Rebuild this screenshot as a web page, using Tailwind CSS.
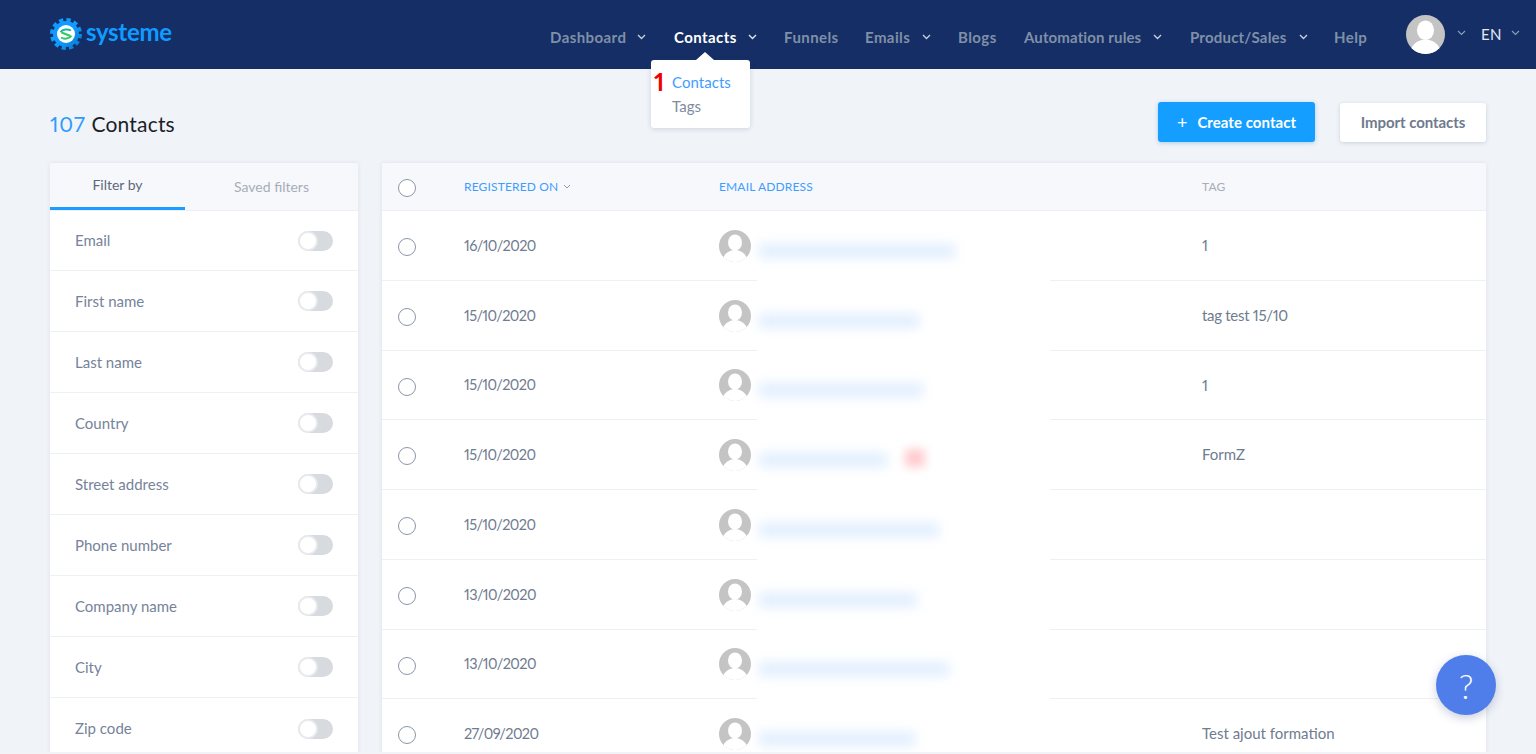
<!doctype html>
<html lang="en">
<head>
<meta charset="utf-8">
<title>Contacts</title>
<script src="https://cdn.jsdelivr.net/npm/@tailwindcss/browser@4"></script>
</head>
<body class="relative h-[754px] w-[1536px] overflow-hidden bg-[#f0f3f8] font-['Lato',sans-serif] proportional-nums">
<header class="relative flex h-[69px] items-start bg-[#152e65]">
  <div class="flex w-[550px] shrink-0 items-start pl-[50px] pt-[18px]">
    <svg class="h-[32px] w-[32px]" viewBox="0 0 32 32">
      <defs><linearGradient id="g" x1="0" y1="0" x2="1" y2="1"><stop offset="0.55" stop-color="#0f9bff"/><stop offset="1" stop-color="#0a78c8"/></linearGradient></defs>
      <circle cx="16" cy="16" r="13" fill="url(#g)"/>
      <circle cx="16" cy="16" r="14" fill="none" stroke="url(#g)" stroke-width="4" stroke-dasharray="4.2 3.13"/>
      <circle cx="16" cy="16" r="9" fill="#fff"/>
      <path d="M10.500 14.200c2-3 7.500-3.400 10.500-1.700" fill="none" stroke="#18b5a0" stroke-width="2"/>
      <path d="M11 19.500c3 1.900 8.500 1.500 10.500-1.800" fill="none" stroke="#2ec866" stroke-width="2"/>
      <path d="M11.500 14.500l9 3.500" stroke="#2ec866" stroke-width="2"/>
    </svg>
    <span class="ml-[4px] -mt-[1px] text-[24px] leading-[30px] font-bold tracking-[-0.3px] text-[#0f9bff]">systeme</span>
  </div>
  <nav class="flex h-[69px] items-start pt-[28px] text-[15px] leading-[18px] font-bold tracking-[0.42px] text-[#7f90a8]">
    <a class="flex w-[124px] items-center">Dashboard<svg class="ml-[11px] h-[6px] w-[9px]" viewBox="0 0 9 6"><path d="M1 1l3.500 3.500L8 1" fill="none" stroke="#c5ceda" stroke-width="1.400"/></svg></a>
    <a class="flex w-[110px] items-center text-white">Contacts<svg class="ml-[11px] h-[6px] w-[9px]" viewBox="0 0 9 6"><path d="M1 1l3.500 3.500L8 1" fill="none" stroke="#dfe5ee" stroke-width="1.400"/></svg></a>
    <a class="w-[81px]">Funnels</a>
    <a class="flex w-[93px] items-center">Emails<svg class="ml-[12px] h-[6px] w-[9px]" viewBox="0 0 9 6"><path d="M1 1l3.500 3.500L8 1" fill="none" stroke="#c5ceda" stroke-width="1.400"/></svg></a>
    <a class="w-[66px]">Blogs</a>
    <a class="flex w-[166px] items-center tracking-[0.12px]">Automation rules<svg class="ml-[12px] h-[6px] w-[9px]" viewBox="0 0 9 6"><path d="M1 1l3.500 3.500L8 1" fill="none" stroke="#c5ceda" stroke-width="1.400"/></svg></a>
    <a class="flex w-[144px] items-center tracking-[0.2px]">Product/Sales<svg class="ml-[12px] h-[6px] w-[9px]" viewBox="0 0 9 6"><path d="M1 1l3.500 3.500L8 1" fill="none" stroke="#c5ceda" stroke-width="1.400"/></svg></a>
    <a class="w-[72px]">Help</a>
  </nav>
  <div class="flex items-start pt-[15px]">
    <svg class="h-[39px] w-[39px] rounded-full" viewBox="0 0 32 32"><rect width="32" height="32" fill="#c4c4c4"/><ellipse cx="16" cy="12.500" rx="7" ry="8" fill="#fff"/><ellipse cx="16" cy="33" rx="13" ry="13" fill="#fff"/></svg>
    <svg class="ml-[12px] mt-[15px] h-[6px] w-[9px]" viewBox="0 0 9 6"><path d="M1 1l3.500 3.500L8 1" fill="none" stroke="#8d9cb3" stroke-width="1.200"/></svg>
    <span class="ml-[15px] mt-[10px] text-[15px] leading-[18px] tracking-[0.4px] text-[#e4e9f1]">EN</span>
    <svg class="ml-[9px] mt-[15px] h-[6px] w-[9px]" viewBox="0 0 9 6"><path d="M1 1l3.500 3.500L8 1" fill="none" stroke="#8d9cb3" stroke-width="1.200"/></svg>
  </div>
  <div class="absolute left-[651px] top-[60px] z-20 h-[68px] w-[99px] rounded-[3px] bg-white pl-[21px] pt-[10px] text-[15px] leading-[24px] tracking-[0.05px] shadow-[0_1px_5px_rgba(60,80,120,0.2)]">
    <div class="absolute left-[45px] top-[-8px] h-0 w-0 border-x-[9px] border-b-[8px] border-x-transparent border-b-white"></div>
    <span class="absolute left-[3px] top-[7px] text-[25px] leading-[28px] font-bold text-[#f00000]">1</span>
    <div class="text-[#3f9dff]">Contacts</div>
    <div class="text-[#7f8b9d]">Tags</div>
  </div>
</header>

<main class="px-[50px]">
  <div class="flex h-[94px] items-start justify-between">
    <h1 class="pt-[40px] text-[21px] leading-[30px] tracking-[0.2px] text-[#1b1f28]"><span class="tracking-[0.9px] text-[#2f9bff]">107</span> Contacts</h1>
    <div class="flex items-start pt-[33px]">
      <button class="flex h-[40px] w-[157px] items-center justify-center rounded-[3px] bg-[#149eff] text-[15px] font-bold tracking-[0.05px] text-white shadow-[0_1px_4px_rgba(20,120,220,0.3)]"><span class="mr-[10px] text-[18px] leading-[18px] font-normal">+</span>Create contact</button>
      <button class="ml-[25px] mt-[1px] h-[39px] w-[146px] rounded-[3px] bg-white text-[15px] font-bold tracking-[-0.07px] text-[#6e7a8e] shadow-[0_1px_4px_rgba(60,80,120,0.2)]">Import contacts</button>
    </div>
  </div>

  <div class="flex items-start gap-[24px]">
    <aside class="w-[308px] shrink-0 rounded-[3px] bg-white text-[15px] text-[#76839a] shadow-[0_0_4px_rgba(60,80,120,0.1)]">
      <div class="flex h-[48px] border-b border-[#edf0f4] bg-[#f7f8fb] text-[14px]">
        <div class="flex h-[47px] w-[135px] items-center justify-center border-b-[3px] border-[#1c9cff] pb-[1px] text-[#5d687d]">Filter by</div>
        <div class="flex h-[47px] w-[173px] items-center justify-center pb-[1px] text-[#a6adb9]">Saved filters</div>
      </div>
      <div class="flex h-[60px] items-center justify-between border-b border-[#edf0f4] px-[25px]">Email<div class="flex h-[20px] w-[35px] items-center rounded-full bg-[#d7dadf]"><div class="h-[20px] w-[20px] rounded-full border-[2px] border-[#e8eaed] bg-white"></div></div></div>
      <div class="flex h-[61px] items-center justify-between border-b border-[#edf0f4] px-[25px]">First name<div class="flex h-[20px] w-[35px] items-center rounded-full bg-[#d7dadf]"><div class="h-[20px] w-[20px] rounded-full border-[2px] border-[#e8eaed] bg-white"></div></div></div>
      <div class="flex h-[61px] items-center justify-between border-b border-[#edf0f4] px-[25px]">Last name<div class="flex h-[20px] w-[35px] items-center rounded-full bg-[#d7dadf]"><div class="h-[20px] w-[20px] rounded-full border-[2px] border-[#e8eaed] bg-white"></div></div></div>
      <div class="flex h-[61px] items-center justify-between border-b border-[#edf0f4] px-[25px]">Country<div class="flex h-[20px] w-[35px] items-center rounded-full bg-[#d7dadf]"><div class="h-[20px] w-[20px] rounded-full border-[2px] border-[#e8eaed] bg-white"></div></div></div>
      <div class="flex h-[61px] items-center justify-between border-b border-[#edf0f4] px-[25px]">Street address<div class="flex h-[20px] w-[35px] items-center rounded-full bg-[#d7dadf]"><div class="h-[20px] w-[20px] rounded-full border-[2px] border-[#e8eaed] bg-white"></div></div></div>
      <div class="flex h-[61px] items-center justify-between border-b border-[#edf0f4] px-[25px]">Phone number<div class="flex h-[20px] w-[35px] items-center rounded-full bg-[#d7dadf]"><div class="h-[20px] w-[20px] rounded-full border-[2px] border-[#e8eaed] bg-white"></div></div></div>
      <div class="flex h-[61px] items-center justify-between border-b border-[#edf0f4] px-[25px]">Company name<div class="flex h-[20px] w-[35px] items-center rounded-full bg-[#d7dadf]"><div class="h-[20px] w-[20px] rounded-full border-[2px] border-[#e8eaed] bg-white"></div></div></div>
      <div class="flex h-[61px] items-center justify-between border-b border-[#edf0f4] px-[25px]">City<div class="flex h-[20px] w-[35px] items-center rounded-full bg-[#d7dadf]"><div class="h-[20px] w-[20px] rounded-full border-[2px] border-[#e8eaed] bg-white"></div></div></div>
      <div class="flex h-[62px] items-center justify-between border-b border-[#edf0f4] px-[25px]">Zip code<div class="flex h-[20px] w-[35px] items-center rounded-full bg-[#d7dadf]"><div class="h-[20px] w-[20px] rounded-full border-[2px] border-[#e8eaed] bg-white"></div></div></div>
    </aside>

    <section class="relative w-[1104px] rounded-[3px] bg-white text-[15px] text-[#6f7c90] shadow-[0_0_4px_rgba(60,80,120,0.1)]">
      <div class="absolute left-[375px] top-[67px] h-[560px] w-[293px] bg-white"></div>
      <div class="flex h-[48px] items-center border-b border-[#edf0f4] bg-[#f7f8fb] pl-[16px] text-[12px] tracking-[0.15px]">
        <div class="mt-[3px] h-[18px] w-[66px]"><div class="h-[18px] w-[18px] rounded-full border border-[#8b97a8] bg-white"></div></div>
        <div class="flex w-[255px] items-center text-[#3f9dff]">REGISTERED ON<svg class="ml-[5px] h-[5px] w-[8px]" viewBox="0 0 8 5"><path d="M1 1l3 3 3-3" fill="none" stroke="#8d9cb3" stroke-width="1"/></svg></div>
        <div class="w-[483px] text-[#3f9dff]">EMAIL ADDRESS</div>
        <div class="text-[#a6adb9]">TAG</div>
      </div>

      <div class="flex h-[70px] items-center border-b border-[#edf0f4] pl-[16px]">
        <div class="mt-[3px] h-[18px] w-[66px]"><div class="h-[18px] w-[18px] rounded-full border border-[#8b97a8] bg-white"></div></div>
        <div class="w-[255px] text-[14.500px] tracking-[-0.6px]">16/10/2020</div>
        <div class="relative z-10 flex w-[483px] items-center"><svg class="h-[32px] w-[32px] rounded-full" viewBox="0 0 32 32"><rect width="32" height="32" fill="#c4c4c4"/><ellipse cx="16" cy="12.500" rx="7" ry="8" fill="#fff"/><ellipse cx="16" cy="33" rx="13" ry="13" fill="#fff"/></svg><div class="ml-[8px] mt-[10px] h-[14px] w-[196px] bg-[#e0eefe] blur-[6px]"></div></div>
        <div>1</div>
      </div>
      <div class="flex h-[70px] items-center border-b border-[#edf0f4] pl-[16px]">
        <div class="mt-[3px] h-[18px] w-[66px]"><div class="h-[18px] w-[18px] rounded-full border border-[#8b97a8] bg-white"></div></div>
        <div class="w-[255px] text-[14.500px] tracking-[-0.6px]">15/10/2020</div>
        <div class="relative z-10 flex w-[483px] items-center"><svg class="h-[32px] w-[32px] rounded-full" viewBox="0 0 32 32"><rect width="32" height="32" fill="#c4c4c4"/><ellipse cx="16" cy="12.500" rx="7" ry="8" fill="#fff"/><ellipse cx="16" cy="33" rx="13" ry="13" fill="#fff"/></svg><div class="ml-[8px] mt-[10px] h-[14px] w-[160px] bg-[#e0eefe] blur-[6px]"></div></div>
        <div class="tracking-[-0.3px]">tag test 15/10</div>
      </div>
      <div class="flex h-[69px] items-center border-b border-[#edf0f4] pl-[16px]">
        <div class="mt-[3px] h-[18px] w-[66px]"><div class="h-[18px] w-[18px] rounded-full border border-[#8b97a8] bg-white"></div></div>
        <div class="w-[255px] text-[14.500px] tracking-[-0.6px]">15/10/2020</div>
        <div class="relative z-10 flex w-[483px] items-center"><svg class="h-[32px] w-[32px] rounded-full" viewBox="0 0 32 32"><rect width="32" height="32" fill="#c4c4c4"/><ellipse cx="16" cy="12.500" rx="7" ry="8" fill="#fff"/><ellipse cx="16" cy="33" rx="13" ry="13" fill="#fff"/></svg><div class="ml-[8px] mt-[10px] h-[14px] w-[164px] bg-[#e0eefe] blur-[6px]"></div></div>
        <div>1</div>
      </div>
      <div class="flex h-[70px] items-center border-b border-[#edf0f4] pl-[16px]">
        <div class="mt-[3px] h-[18px] w-[66px]"><div class="h-[18px] w-[18px] rounded-full border border-[#8b97a8] bg-white"></div></div>
        <div class="w-[255px] text-[14.500px] tracking-[-0.6px]">15/10/2020</div>
        <div class="relative z-10 flex w-[483px] items-center"><svg class="h-[32px] w-[32px] rounded-full" viewBox="0 0 32 32"><rect width="32" height="32" fill="#c4c4c4"/><ellipse cx="16" cy="12.500" rx="7" ry="8" fill="#fff"/><ellipse cx="16" cy="33" rx="13" ry="13" fill="#fff"/></svg><div class="ml-[8px] mt-[10px] h-[14px] w-[128px] bg-[#e0eefe] blur-[6px]"></div><div class="ml-[18px] mt-[6px] h-[18px] w-[20px] bg-[#ffccd0] blur-[5px]"></div></div>
        <div>FormZ</div>
      </div>
      <div class="flex h-[70px] items-center border-b border-[#edf0f4] pl-[16px]">
        <div class="mt-[3px] h-[18px] w-[66px]"><div class="h-[18px] w-[18px] rounded-full border border-[#8b97a8] bg-white"></div></div>
        <div class="w-[255px] text-[14.500px] tracking-[-0.6px]">15/10/2020</div>
        <div class="relative z-10 flex w-[483px] items-center"><svg class="h-[32px] w-[32px] rounded-full" viewBox="0 0 32 32"><rect width="32" height="32" fill="#c4c4c4"/><ellipse cx="16" cy="12.500" rx="7" ry="8" fill="#fff"/><ellipse cx="16" cy="33" rx="13" ry="13" fill="#fff"/></svg><div class="ml-[8px] mt-[10px] h-[14px] w-[180px] bg-[#e0eefe] blur-[6px]"></div></div>
        <div></div>
      </div>
      <div class="flex h-[70px] items-center border-b border-[#edf0f4] pl-[16px]">
        <div class="mt-[3px] h-[18px] w-[66px]"><div class="h-[18px] w-[18px] rounded-full border border-[#8b97a8] bg-white"></div></div>
        <div class="w-[255px] text-[14.500px] tracking-[-0.6px]">13/10/2020</div>
        <div class="relative z-10 flex w-[483px] items-center"><svg class="h-[32px] w-[32px] rounded-full" viewBox="0 0 32 32"><rect width="32" height="32" fill="#c4c4c4"/><ellipse cx="16" cy="12.500" rx="7" ry="8" fill="#fff"/><ellipse cx="16" cy="33" rx="13" ry="13" fill="#fff"/></svg><div class="ml-[8px] mt-[10px] h-[14px] w-[158px] bg-[#e0eefe] blur-[6px]"></div></div>
        <div></div>
      </div>
      <div class="flex h-[69px] items-center border-b border-[#edf0f4] pl-[16px]">
        <div class="mt-[3px] h-[18px] w-[66px]"><div class="h-[18px] w-[18px] rounded-full border border-[#8b97a8] bg-white"></div></div>
        <div class="w-[255px] text-[14.500px] tracking-[-0.6px]">13/10/2020</div>
        <div class="relative z-10 flex w-[483px] items-center"><svg class="h-[32px] w-[32px] rounded-full" viewBox="0 0 32 32"><rect width="32" height="32" fill="#c4c4c4"/><ellipse cx="16" cy="12.500" rx="7" ry="8" fill="#fff"/><ellipse cx="16" cy="33" rx="13" ry="13" fill="#fff"/></svg><div class="ml-[8px] mt-[10px] h-[14px] w-[190px] bg-[#e0eefe] blur-[6px]"></div></div>
        <div></div>
      </div>
      <div class="flex h-[70px] items-center border-b border-[#edf0f4] pl-[16px]">
        <div class="mt-[3px] h-[18px] w-[66px]"><div class="h-[18px] w-[18px] rounded-full border border-[#8b97a8] bg-white"></div></div>
        <div class="w-[255px] text-[14.500px] tracking-[-0.6px]">27/09/2020</div>
        <div class="relative z-10 flex w-[483px] items-center"><svg class="h-[32px] w-[32px] rounded-full" viewBox="0 0 32 32"><rect width="32" height="32" fill="#c4c4c4"/><ellipse cx="16" cy="12.500" rx="7" ry="8" fill="#fff"/><ellipse cx="16" cy="33" rx="13" ry="13" fill="#fff"/></svg><div class="ml-[8px] mt-[10px] h-[14px] w-[156px] bg-[#e0eefe] blur-[6px]"></div></div>
        <div>Test ajout formation</div>
      </div>
    </section>
  </div>
</main>

<div class="absolute bottom-0 left-0 z-20 h-[2px] w-full bg-[#f1f3f6]"></div>
<button class="absolute left-[1436px] top-[655px] z-30 flex h-[60px] w-[60px] items-center justify-center rounded-full bg-[#4f7de9] text-[34px] font-light text-white shadow-[0_3px_10px_rgba(40,60,120,0.25)]">?</button>
</body>
</html>
